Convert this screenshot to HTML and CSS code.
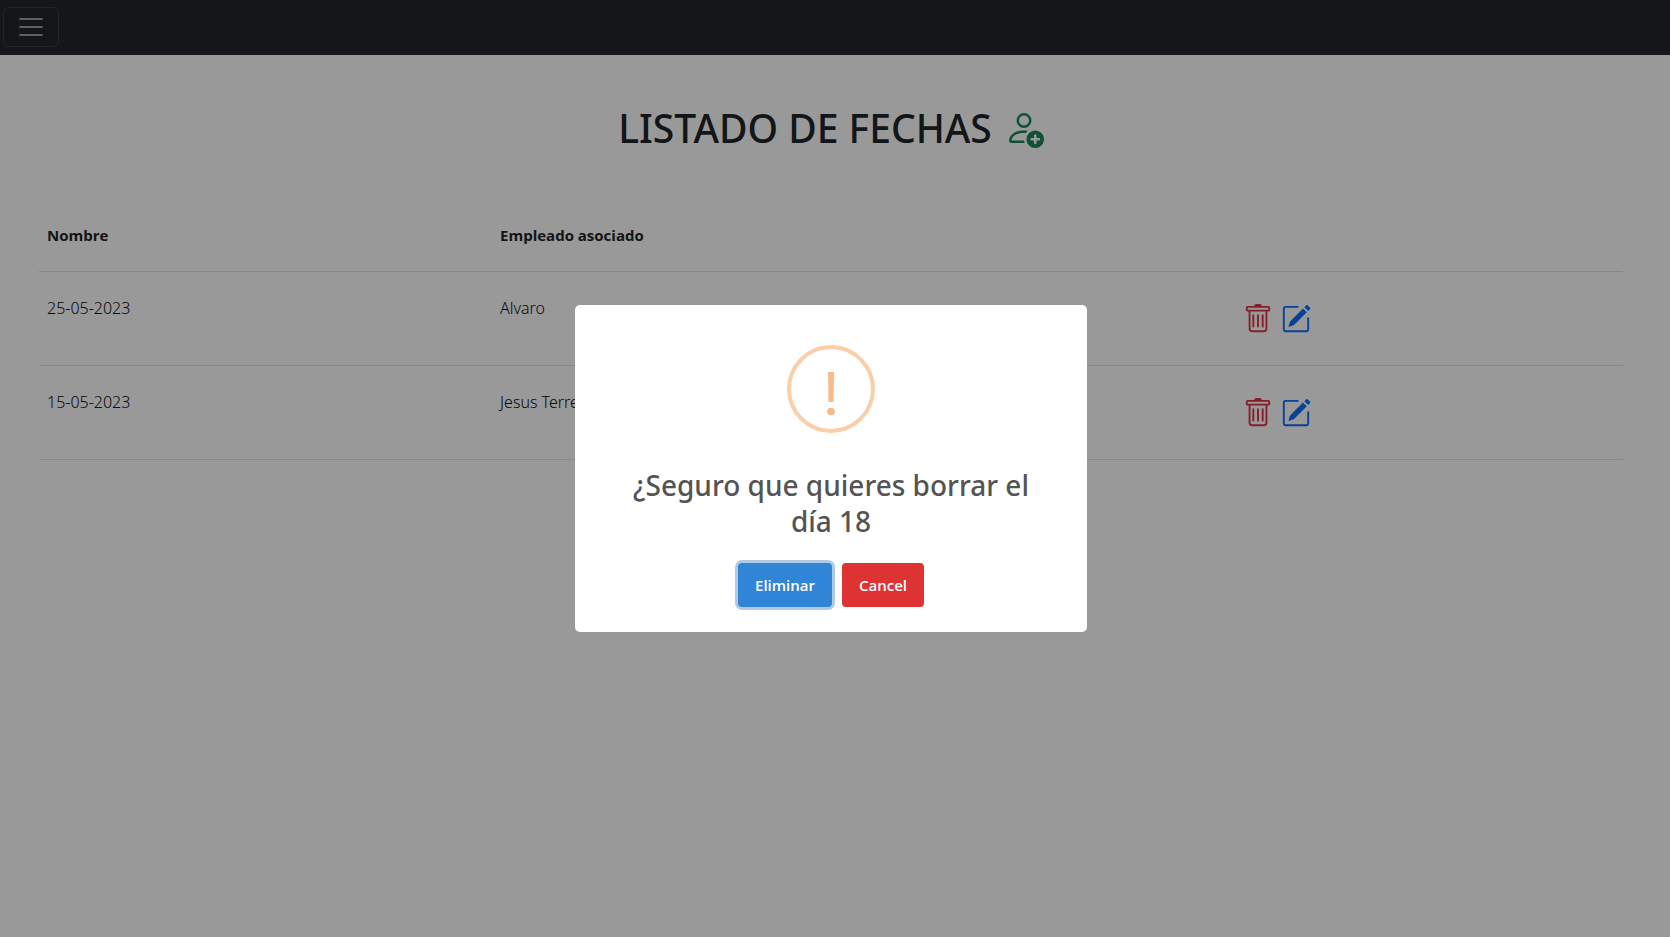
FILE: index.html
```html
<!DOCTYPE html>
<html lang="es">
<head>
<meta charset="utf-8">
<meta name="viewport" content="width=device-width, initial-scale=1">
<title>Listado de fechas</title>
<link rel="stylesheet" href="styles.css">
</head>
<body>
<svg class="sprite" aria-hidden="true">
  <symbol id="trash" viewBox="0 0 16 16"><path d="M5.5 5.5A.5.5 0 0 1 6 6v6a.5.5 0 0 1-1 0V6a.5.5 0 0 1 .5-.5zm2.5 0a.5.5 0 0 1 .5.5v6a.5.5 0 0 1-1 0V6a.5.5 0 0 1 .5-.5zm3 .5a.5.5 0 0 0-1 0v6a.5.5 0 0 0 1 0V6z"/><path fill-rule="evenodd" d="M14.5 3a1 1 0 0 1-1 1H13v9a2 2 0 0 1-2 2H5a2 2 0 0 1-2-2V4h-.5a1 1 0 0 1-1-1V2a1 1 0 0 1 1-1H6a1 1 0 0 1 1-1h2a1 1 0 0 1 1 1h3.5a1 1 0 0 1 1 1v1zM4.118 4 4 4.059V13a1 1 0 0 0 1 1h6a1 1 0 0 0 1-1V4.059L11.882 4H4.118zM2.5 3V2h11v1h-11z"/></symbol>
  <symbol id="edit" viewBox="0 0 16 16"><path d="M15.502 1.94a.5.5 0 0 1 0 .706L14.459 3.69l-2-2L13.502.646a.5.5 0 0 1 .707 0l1.293 1.293zm-1.75 2.456-2-2L4.939 9.21a.5.5 0 0 0-.121.196l-.805 2.414a.25.25 0 0 0 .316.316l2.414-.805a.5.5 0 0 0 .196-.12l6.813-6.814z"/><path fill-rule="evenodd" d="M1 13.5A1.5 1.5 0 0 0 2.5 15h11a1.5 1.5 0 0 0 1.5-1.5v-6a.5.5 0 0 0-1 0v6a.5.5 0 0 1-.5.5h-11a.5.5 0 0 1-.5-.5v-11a.5.5 0 0 1 .5-.5H9a.5.5 0 0 0 0-1H2.5A1.5 1.5 0 0 0 1 2.5v11z"/></symbol>
</svg>

<nav class="navbar">
  <button class="toggler" type="button" aria-label="Menú">
    <svg viewBox="0 0 30 30" width="30" height="30"><path stroke="#fff" stroke-opacity=".55" stroke-linecap="round" stroke-miterlimit="10" stroke-width="2" d="M4 7h22M4 15h22M4 23h22"/></svg>
  </button>
</nav>

<main class="page">
  <h1 class="heading">
    LISTADO DE FECHAS
    <a class="add" href="#" aria-label="Añadir">
      <svg viewBox="0 0 16 16" width="40" height="40"><path d="M12.5 16a3.5 3.5 0 1 0 0-7 3.5 3.5 0 0 0 0 7Zm.5-5v1h1a.5.5 0 0 1 0 1h-1v1a.5.5 0 0 1-1 0v-1h-1a.5.5 0 0 1 0-1h1v-1a.5.5 0 0 1 1 0Zm-2-6a3 3 0 1 1-6 0 3 3 0 0 1 6 0ZM8 7a2 2 0 1 0 0-4 2 2 0 0 0 0 4Z"/><path d="M8.256 14a4.474 4.474 0 0 1-.229-1.004H3c.001-.246.154-.986.832-1.664C4.484 10.68 5.711 10 8 10c.26 0 .507.009.74.025.226-.341.496-.65.804-.918C9.077 9.038 8.564 9 8 9c-5 0-6 3-6 4s1 1 1 1h5.256Z"/></svg>
    </a>
  </h1>

  <table class="dates">
    <thead>
      <tr><th class="col-date" scope="col">Nombre</th><th class="col-employee" scope="col">Empleado asociado</th><td></td></tr>
    </thead>
    <tbody>
      <tr>
        <td>25-05-2023</td><td>Alvaro</td>
        <td><div class="actions">
          <button class="icon-button delete" type="button" aria-label="Eliminar"><svg width="30" height="30"><use href="#trash"/></svg></button>
          <a class="icon-button edit" href="#" aria-label="Editar"><svg width="30" height="30"><use href="#edit"/></svg></a>
        </div></td>
      </tr>
      <tr>
        <td>15-05-2023</td><td>Jesus Terre</td>
        <td><div class="actions">
          <button class="icon-button delete" type="button" aria-label="Eliminar"><svg width="30" height="30"><use href="#trash"/></svg></button>
          <a class="icon-button edit" href="#" aria-label="Editar"><svg width="30" height="30"><use href="#edit"/></svg></a>
        </div></td>
      </tr>
    </tbody>
  </table>
</main>

<div class="backdrop">
  <section class="modal" role="dialog" aria-modal="true" aria-labelledby="modal-title">
    <svg class="warning" viewBox="0 0 88 88" width="88" height="88" aria-hidden="true">
      <circle cx="44" cy="44" r="42" fill="none" stroke="#facea8" stroke-width="4"/>
      <path fill="#f8bb86" d="M41 27h6l-.5 30h-5z"/>
      <circle cx="44" cy="66.500" r="3.800" fill="#f8bb86"/>
    </svg>
    <h2 class="modal-title" id="modal-title">¿Seguro que quieres borrar el día 18</h2>
    <div class="modal-actions">
      <button class="button confirm" type="button">Eliminar</button>
      <button class="button cancel" type="button">Cancel</button>
    </div>
  </section>
</div>
</body>
</html>
```
FILE: styles.css
```css
* { box-sizing: border-box; }

body {
  margin: 0;
  min-height: 100vh;
  background: #fff;
  color: #212529;
  font: 400 16px/24px "Noto Sans", "Open Sans", sans-serif;
}

svg { display: block; fill: currentColor; }
.sprite { position: absolute; width: 0; height: 0; }

.navbar {
  display: flex;
  padding: 7px 3px 8px;
  background: #24262b;
}

.toggler {
  padding: 4px 12px;
  border: 1px solid rgba(255, 255, 255, .1);
  border-radius: 6px;
  background: none;
}

.page { padding: 48px 47px 0 39px; }

.heading {
  display: flex;
  align-items: center;
  justify-content: center;
  gap: 12px;
  margin: 0 0 46px;
  font-size: 39px;
  font-weight: 500;
  line-height: 50px;
}

.add { color: #198754; }

.dates {
  width: 100%;
  table-layout: fixed;
  border-collapse: separate;
  border-spacing: 0;
}

.dates th,
.dates td {
  padding: 24px 8px;
  border-bottom: 1px solid #dee2e6;
  text-align: left;
  vertical-align: top;
}

.dates th { font: 700 15px/24px "Open Sans", "Noto Sans", sans-serif; }
.dates td { color: #0c0e10; font-weight: 300; }
.col-date { width: 28.6%; }
.col-employee { width: 46.9%; }

.actions {
  display: flex;
  gap: 8px;
  padding: 8px 0 7px;
}

.icon-button { padding: 0; border: 0; background: none; }
.delete { color: #dc3545; }
.edit { color: #0d6efd; }

.backdrop {
  position: fixed;
  inset: 0;
  display: flex;
  align-items: center;
  justify-content: center;
  padding-right: 8px;
  background: rgba(0, 0, 0, .4);
}

.modal {
  width: 512px;
  max-width: 100%;
  padding: 40px 32px 25px;
  border-radius: 5px;
  background: #fff;
  text-align: center;
}

.warning { margin: 0 auto 34px; }

.modal-title {
  margin: 0 16px 24px;
  color: #545454;
  font-size: 28px;
  font-weight: 500;
  line-height: 36px;
}

.modal-actions {
  display: flex;
  justify-content: center;
  gap: 10px;
}

.button {
  padding: 10px 17px;
  border: 0;
  border-radius: 4px;
  color: #fff;
  font: 600 15px/24px "Open Sans", "Noto Sans", sans-serif;
}

.confirm { background: #3085d6; box-shadow: 0 0 0 3px #b0cae5; }
.cancel { background: #dd3333; }
```
